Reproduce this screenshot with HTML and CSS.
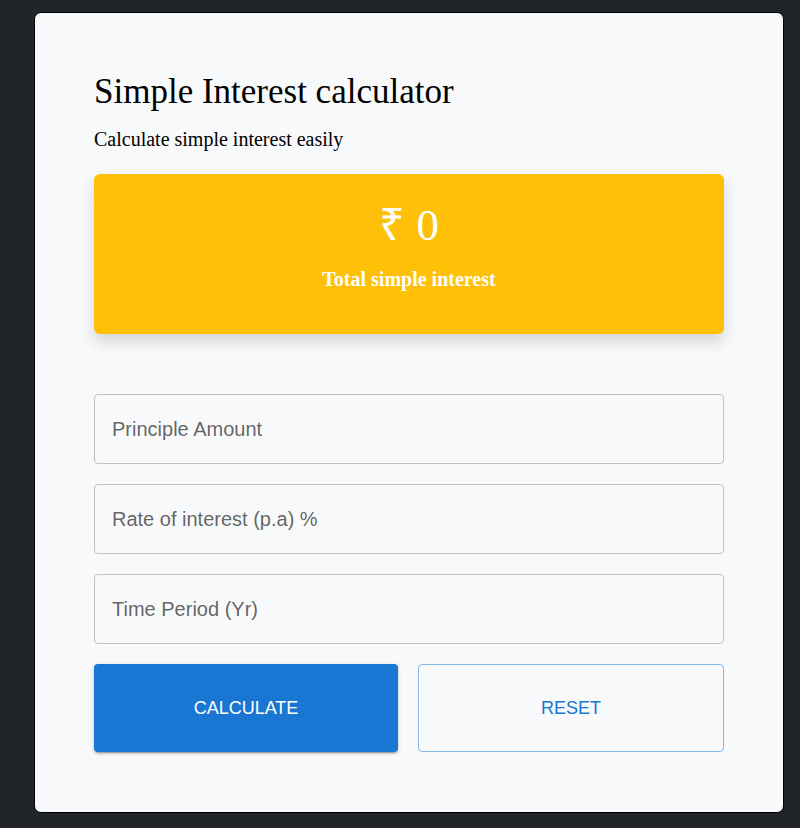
FILE: index.html
```html
<!DOCTYPE html>
<html lang="en">
<head>
<meta charset="utf-8">
<title>Simple Interest calculator</title>
<link rel="stylesheet" href="styles.css">
</head>
<body>
<main class="card">
  <h1 class="title">Simple Interest calculator</h1>
  <p class="lead">Calculate simple interest easily</p>
  <section class="result">
    <div class="amount">₹ 0</div>
    <div class="caption">Total simple interest</div>
  </section>
  <form class="form">
    <input class="field" type="text" placeholder="Principle Amount">
    <input class="field" type="text" placeholder="Rate of interest (p.a) %">
    <input class="field" type="text" placeholder="Time Period (Yr)">
    <div class="actions">
      <button type="button" class="btn btn-primary">Calculate</button>
      <button type="button" class="btn btn-outline">Reset</button>
    </div>
  </form>
</main>
</body>
</html>
```
FILE: styles.css
```css
* { box-sizing: border-box; }
html, body { margin: 0; }
body {
  background: #212529;
  padding: 12px 16px 16px 34px;
  font-family: "Liberation Serif", "Times New Roman", serif;
  color: #000;
}
.card {
  width: 750px;
  height: 801px;
  background: #f8f9fa;
  border: 1px solid #000;
  border-radius: 7px;
  padding: 60px 59px 59px;
  display: flex;
  flex-direction: column;
}
.title {
  margin: 0;
  font-size: 35px;
  font-weight: 400;
  line-height: 38px;
}
.lead {
  margin: 13px 0 0;
  font-size: 20px;
  line-height: 30px;
}
.result {
  margin-top: 20px;
  height: 160px;
  background: #ffc107;
  border-radius: 6px;
  box-shadow: 0 8px 16px rgba(0,0,0,.15);
  padding-top: 24px;
  color: #fff;
  text-align: center;
}
.amount {
  font-size: 45px;
  line-height: 54px;
  font-weight: 300;
}
.caption {
  margin-top: 15px;
  font-size: 20px;
  line-height: 24px;
  font-weight: 700;
}
.form {
  margin-top: 60px;
  display: flex;
  flex-direction: column;
  gap: 20px;
}
.field {
  height: 70px;
  width: 100%;
  border: 1px solid #c0c1c2;
  border-radius: 4px;
  background: transparent;
  padding: 0 16px 0 17px;
  font-family: "Liberation Sans", Arial, sans-serif;
  font-size: 20px;
  color: #212529;
  outline: none;
}
.field::placeholder { color: rgba(0,0,0,.62); opacity: 1; }
.actions {
  display: flex;
  gap: 20px;
}
.btn {
  flex: 1;
  height: 88px;
  border-radius: 4px;
  font-family: "Liberation Sans", Arial, sans-serif;
  font-size: 18px;
  text-transform: uppercase;
  cursor: pointer;
}
.btn-primary {
  background: #1976d2;
  color: #fff;
  border: 0;
  box-shadow: 0 3px 1px -2px rgba(0,0,0,.2), 0 2px 2px 0 rgba(0,0,0,.14), 0 1px 5px 0 rgba(0,0,0,.12);
}
.btn-outline {
  background: transparent;
  color: #1976d2;
  border: 1px solid rgba(25,118,210,.5);
}
```
